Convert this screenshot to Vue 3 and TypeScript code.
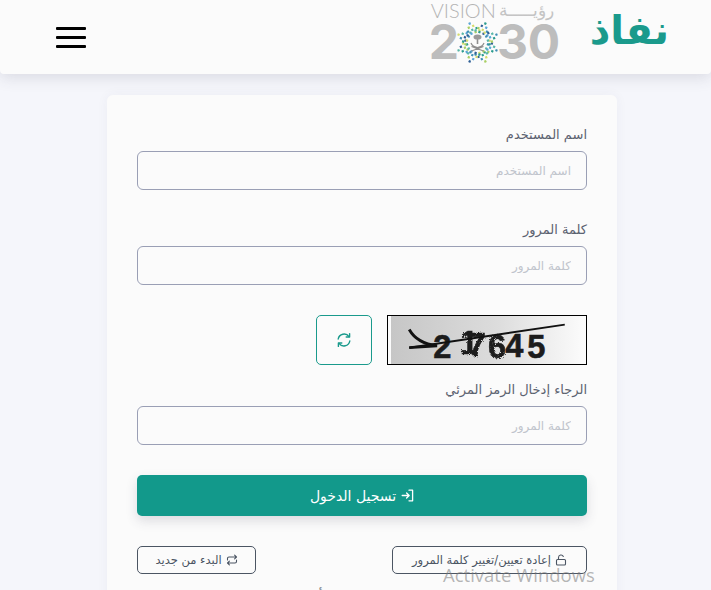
<script setup lang="ts">
interface Field {
  label: string
  placeholder: string
}

const userField: Field = { label: 'اسم المستخدم', placeholder: 'اسم المستخدم' }
const passField: Field = { label: 'كلمة المرور', placeholder: 'كلمة المرور' }
const captchaField: Field = { label: 'الرجاء إدخال الرمز المرئي', placeholder: 'كلمة المرور' }

const dotColors = ['#3f8fb5', '#a9cf63', '#2f5f95', '#58b7a8', '#d5dc6a', '#5aa6d6', '#2c9c8e']

// small squares in a triangle on each of the 8 star points
const petal = [
  [20.5, 0], [17, -2.4], [17, 2.4], [13.6, -4.6], [13.6, 0], [13.6, 4.6],
  [10.4, -6.4], [10.4, -2.2], [10.4, 2.2], [10.4, 6.4],
]
const dots = Array.from({ length: 8 }, (_, k) => k).flatMap((k) => {
  const a = (k * Math.PI) / 4 + Math.PI / 8
  return petal.map(([r, s], i) => ({
    x: 21.5 + Math.cos(a) * r - Math.sin(a) * s,
    y: 21.5 + Math.sin(a) * r + Math.cos(a) * s,
    deg: (a * 180) / Math.PI,
    color: dotColors[(i * 3 + k) % dotColors.length],
  }))
})
</script>

<template>
  <div class="page" dir="rtl">
    <header class="topbar">
      <div class="brand">نفاذ</div>
      <div class="vision" dir="ltr">
        <div class="vision-top">
          <span>VISION</span>
          <span class="vision-ar" dir="rtl">رؤيـــــة</span>
        </div>
        <div class="vision-year">
          <span>2</span>
          <svg class="emblem" width="43" height="43" viewBox="0 0 43 43">
            <rect
              v-for="(d, i) in dots"
              :key="i"
              :x="d.x - 1.1"
              :y="d.y - 1.1"
              width="2.2"
              height="2.2"
              :fill="d.color"
              :transform="`rotate(${d.deg} ${d.x} ${d.y})`"
            />
            <circle cx="21.5" cy="21.5" r="8.5" fill="#fbfbfb" />
            <path d="M21.5 14v9" stroke="#8f8f8f" stroke-width="1.6" fill="none" />
            <ellipse cx="21.5" cy="16" rx="4" ry="2.6" fill="#9a9a9a" />
            <path d="M15 22c1 3 3 4 6.500 4.500 3.500-.5 5.500-1.500 6.500-4.500M15.500 30l12-4.500M27.500 30l-12-4.500" fill="none" stroke="#8f8f8f" stroke-width="1.2" />
          </svg>
          <span>30</span>
        </div>
      </div>
      <button class="burger" type="button" aria-label="menu">
        <span></span><span></span><span></span>
      </button>
    </header>

    <main class="card">
      <div class="group">
        <label>{{ userField.label }}</label>
        <input type="text" :placeholder="userField.placeholder">
      </div>
      <div class="group">
        <label>{{ passField.label }}</label>
        <input type="password" :placeholder="passField.placeholder">
      </div>

      <div class="captcha-row" dir="ltr">
        <button class="refresh" type="button" aria-label="refresh">
          <svg width="16" height="16" viewBox="0 0 16 16" fill="none" stroke="#1a9a8c" stroke-width="1.4" stroke-linecap="round" stroke-linejoin="round">
            <path d="M2.200 7A6 6 0 0 1 13 4.600" />
            <path d="M13.600 1.600v3.400h-3.400" />
            <path d="M13.800 9A6 6 0 0 1 3 11.400" />
            <path d="M2.400 14.400V11h3.400" />
          </svg>
        </button>
        <svg class="captcha" width="200" height="50" viewBox="0 0 200 50">
          <defs>
            <linearGradient id="capBg" x1="0" x2="1" y1="0" y2="0">
              <stop offset="0" stop-color="#c6c6c6" />
              <stop offset="0.55" stop-color="#dcdcdc" />
              <stop offset="1" stop-color="#fbfbfb" />
            </linearGradient>
            <filter id="rough" x="-20%" y="-20%" width="140%" height="140%">
              <feTurbulence type="fractalNoise" baseFrequency="0.9" numOctaves="1" seed="4" />
              <feDisplacementMap in="SourceGraphic" scale="4" />
            </filter>
          </defs>
          <rect x="0" y="0" width="200" height="50" fill="url(#capBg)" />
          <text x="44" y="44" class="captcha-text">2</text>
          <g filter="url(#rough)">
            <text x="72" y="40" class="captcha-text">1</text>
            <text x="80" y="42" class="captcha-text">7</text>
            <text x="101" y="44" class="captcha-text">6</text>
          </g>
          <text x="119" y="43" class="captcha-text">4</text>
          <text x="142" y="44" class="captcha-text">5</text>
          <path d="M19 33 L181 9" stroke="#111" stroke-width="2" fill="none" />
          <path d="M19 14 C24 23 32 29 48 31 L19 33" stroke="#111" stroke-width="3" fill="none" />
        </svg>
      </div>

      <div class="group group-captcha">
        <label>{{ captchaField.label }}</label>
        <input type="text" :placeholder="captchaField.placeholder">
      </div>

      <button class="login" type="button">
        <svg width="13" height="13" viewBox="0 0 13 13" fill="none" stroke="#fff" stroke-width="1.3" stroke-linecap="round" stroke-linejoin="round">
          <path d="M8 1.200h3.600v10.600H8" />
          <path d="M1.200 6.500h6.600M5.600 4l2.600 2.500L5.600 9" />
        </svg>
        <span>تسجيل الدخول</span>
      </button>

      <div class="links">
        <button class="outline reset" type="button">
          <svg width="12" height="12" viewBox="0 0 12 12" fill="none" stroke="#4b5563" stroke-width="1.1" stroke-linecap="round">
            <rect x="1.500" y="5.500" width="9" height="5.500" rx="1" />
            <path d="M3.500 5.500V3.400a2.500 2.500 0 0 1 4.800-.9" />
          </svg>
          <span>إعادة تعيين/تغيير كلمة المرور</span>
        </button>
        <button class="outline restart" type="button">
          <svg width="12" height="12" viewBox="0 0 12 12" fill="none" stroke="#4b5563" stroke-width="1.1" stroke-linecap="round" stroke-linejoin="round">
            <path d="M1.500 6V4.500a1.500 1.500 0 0 1 1.500-1.500h7M8.600 1.200 10.500 3 8.600 4.800" />
            <path d="M10.500 6v1.500A1.500 1.500 0 0 1 9 9H2M3.400 7.200 1.500 9l1.900 1.800" />
          </svg>
          <span>البدء من جديد</span>
        </button>
      </div>

      <p class="more">للانتقال إلى منصة أبشر</p>
    </main>

    <div class="watermark" dir="ltr">Activate Windows</div>
  </div>
</template>

<style>
html,
body {
  height: 100%;
  overflow: hidden;
}
</style>

<style scoped>
.page {
  position: relative;
  height: 590px;
  overflow: hidden;
  background: #f5f6fb;
  font-family: "DejaVu Sans", "Noto Sans", sans-serif;
}

.topbar {
  display: flex;
  align-items: flex-start;
  height: 74px;
  padding: 0 44px 0 56px;
  background: #fbfbfb;
  box-shadow: 0 3px 16px rgba(60, 64, 90, 0.16);
  border-radius: 0 0 4px 4px;
}

.brand {
  margin-top: 3px;
  margin-right: -2px;
  font-size: 40px;
  font-weight: 700;
  line-height: 54px;
  color: #1a9a8c;
}

.vision {
  margin-right: 33px;
  width: 128px;
  color: #bdbdbd;
}

.vision-top {
  display: flex;
  justify-content: space-between;
  height: 20px;
  padding-left: 2px;
  font-family: "Lato", sans-serif;
  font-size: 20px;
  font-weight: 300;
  line-height: 20px;
  color: #b4b4b4;
}

.vision-ar {
  margin-right: 3px;
  font-family: "DejaVu Sans", sans-serif;
  font-size: 17px;
  color: #c4c4c4;
}

.vision-year {
  display: flex;
  align-items: center;
  height: 44px;
  font-family: "Inter", sans-serif;
  font-size: 48px;
  font-weight: 700;
  line-height: 44px;
}

.emblem {
  margin: 0 -2.5px;
  flex-shrink: 0;
}

.burger {
  display: flex;
  flex-direction: column;
  gap: 6px;
  width: 30px;
  margin-top: 27px;
  margin-right: auto;
  padding: 0;
  border: 0;
  background: none;
}

.burger span {
  display: block;
  height: 3px;
  background: #000;
  border-radius: 1px;
}

.card {
  box-sizing: border-box;
  width: 510px;
  margin: 21px 94px 0 0;
  padding: 30px 30px 0;
  height: 600px;
  background: #fbfbfb;
  border-radius: 6px;
  box-shadow: 0 0 12px rgba(60, 64, 90, 0.05);
}

.group {
  display: flex;
  flex-direction: column;
  margin-bottom: 30px;
}

.group-captcha {
  margin-top: 15px;
}

.group label {
  height: 26px;
  font-size: 13px;
  line-height: 20px;
  color: #5b6270;
}

.group input {
  box-sizing: border-box;
  height: 39px;
  padding: 0 15px;
  border: 1px solid #9a9fb5;
  border-radius: 6px;
  background: #fbfbfb;
  font-family: inherit;
  font-size: 12px;
}

.group input::placeholder {
  color: #c0c4cc;
}

.captcha-row {
  display: flex;
  justify-content: flex-end;
  gap: 15px;
  height: 50px;
}

.refresh {
  display: flex;
  align-items: center;
  justify-content: center;
  width: 56px;
  height: 50px;
  padding: 0;
  border: 1px solid #1a9a8c;
  border-radius: 5px;
  background: transparent;
}

.captcha {
  box-sizing: border-box;
  border: 1px solid #000;
}

.captcha-text {
  font-family: "Liberation Sans", sans-serif;
  font-size: 34px;
  font-weight: 700;
  fill: #1c1c1c;
  stroke: #1c1c1c;
  stroke-width: 0.6px;
}

.login {
  display: flex;
  align-items: center;
  justify-content: center;
  gap: 5px;
  width: 100%;
  height: 41px;
  border: 0;
  border-radius: 5px;
  background: #12998b;
  box-shadow: 0 5px 12px rgba(60, 64, 90, 0.16);
  color: #fff;
  font-family: inherit;
  font-size: 14px;
}

.links {
  display: flex;
  justify-content: space-between;
  margin-top: 30px;
}

.outline {
  display: flex;
  align-items: center;
  justify-content: center;
  gap: 4px;
  box-sizing: border-box;
  height: 28px;
  padding: 0;
  border: 1px solid #4b5563;
  border-radius: 5px;
  background: transparent;
  color: #4b5563;
  font-family: inherit;
  font-size: 11.5px;
}

.reset {
  width: 195px;
}

.restart {
  width: 119px;
}

.more {
  margin: 14px 0 0;
  font-size: 14px;
  text-align: center;
  color: #4b5563;
}

.watermark {
  position: absolute;
  left: 443px;
  top: 563px;
  font-family: "Open Sans", sans-serif;
  font-size: 18.5px;
  line-height: 24px;
  color: rgba(120, 120, 120, 0.55);
}
</style>
